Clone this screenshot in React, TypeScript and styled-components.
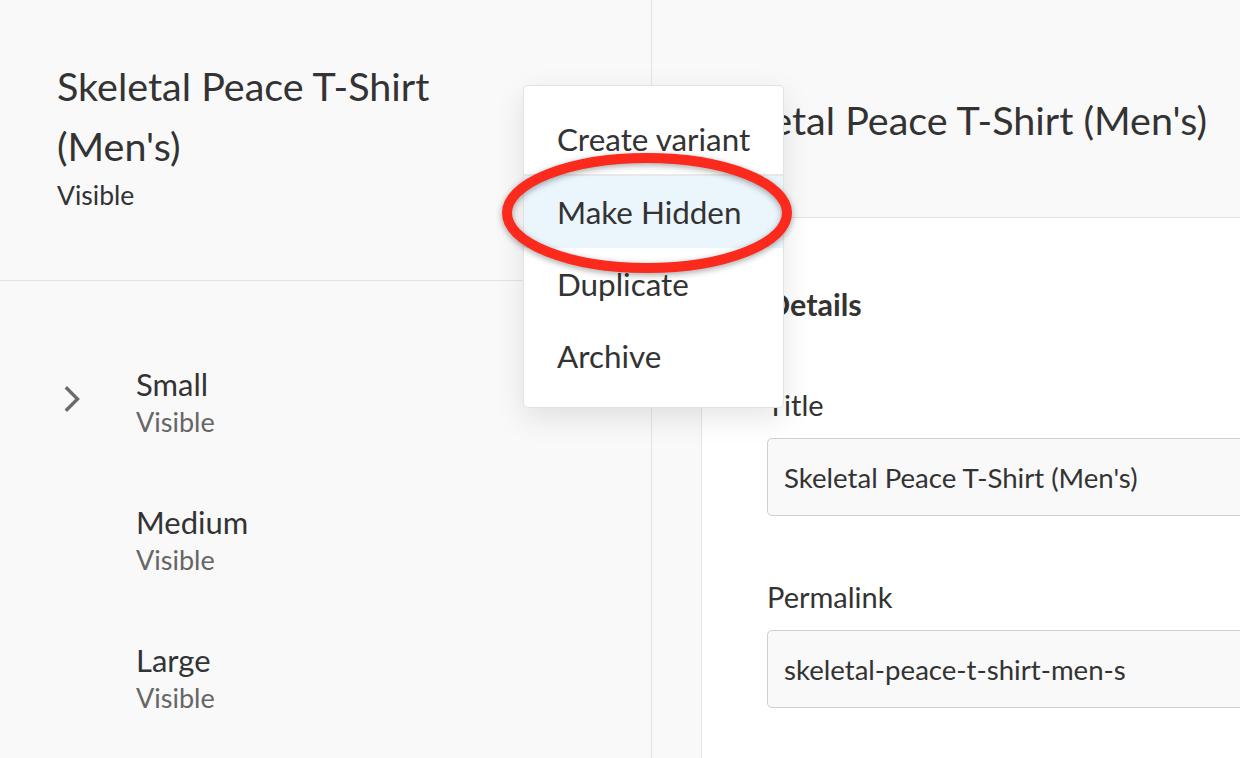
import React from "react";
import styled, { createGlobalStyle } from "styled-components";

const GlobalStyle = createGlobalStyle`
  html, body {
    margin: 0;
    padding: 0;
    background: #f9f9f9;
    overflow: hidden;
  }
  body {
    font-family: "Lato", "Open Sans", sans-serif;
    color: #333;
  }
  * { box-sizing: border-box; }
`;

const Page = styled.div`
  position: relative;
  display: flex;
  width: 1240px;
  height: 758px;
  overflow: hidden;
  background: #f9f9f9;
`;

const Sidebar = styled.aside`
  flex: 0 0 652px;
  display: flex;
  flex-direction: column;
  border-right: 1px solid #e4e4e4;
`;

const SidebarHeader = styled.header`
  flex-shrink: 0;
  height: 281px;
  padding: 56px 57px 0;
  border-bottom: 1px solid #e4e4e4;
`;

const ProductTitle = styled.h1`
  margin: 0;
  max-width: 440px;
  font-size: 39.5px;
  line-height: 60px;
  font-weight: 400;
  color: #333;
`;

const HeaderStatus = styled.div`
  font-size: 26.5px;
  line-height: 38px;
  color: #333;
`;

const VariantList = styled.ul`
  list-style: none;
  margin: 0;
  padding: 84px 0 0 57px;
  display: flex;
  flex-direction: column;
  gap: 62px;
`;

const VariantRow = styled.li`
  display: flex;
  align-items: center;
`;

const IconSlot = styled.div`
  flex: 0 0 79px;
  display: flex;
  align-items: center;
  padding: 0 0 8px 7px;
  color: #6b6b6b;
`;

const VariantText = styled.div`
  display: flex;
  flex-direction: column;
`;

const VariantName = styled.div`
  font-size: 31px;
  line-height: 38px;
  color: #333;
`;

const VariantStatus = styled.div`
  font-size: 27px;
  line-height: 38px;
  color: #666;
`;

const Main = styled.main`
  flex: 1;
  display: flex;
  flex-direction: column;
  padding-left: 49px;
  min-width: 0;
`;

const MainHeader = styled.header`
  flex-shrink: 0;
  height: 217px;
  padding-top: 90px;
`;

const MainTitle = styled.h2`
  margin: 0;
  font-size: 39.5px;
  line-height: 60px;
  font-weight: 400;
  color: #333;
  white-space: nowrap;
`;

const Card = styled.section`
  flex: 1 0 auto;
  width: calc(100% + 40px);
  background: #fff;
  border-top: 1px solid #e4e4e4;
  border-left: 1px solid #e4e4e4;
  padding: 66px 0 0 65px;
`;

const SectionTitle = styled.h3`
  margin: 0 0 61px;
  font-size: 30.5px;
  line-height: 40px;
  font-weight: 700;
  color: #333;
`;

const Field = styled.div`
  display: flex;
  flex-direction: column;
  margin-bottom: 61px;
`;

const Label = styled.label`
  font-size: 29px;
  line-height: 40px;
  margin-bottom: 13px;
  color: #333;
`;

const TextInput = styled.input`
  height: 78px;
  width: 100%;
  border: 1px solid #cfcfcf;
  border-radius: 5px;
  background: #f9f9f9;
  padding: 0 16px;
  font-family: "Lato", "Open Sans", sans-serif;
  font-size: 27.6px;
  color: #333;
  outline: none;
`;

const Menu = styled.ul`
  position: absolute;
  left: 523px;
  top: 85px;
  width: 261px;
  margin: 0;
  padding: 17px 0 15px;
  list-style: none;
  background: #fff;
  border: 1px solid #e2e2e2;
  border-radius: 5px;
  box-shadow: 0 10px 30px rgba(0, 0, 0, 0.1);
  z-index: 2;
`;

const MenuItem = styled.li<{ $active?: boolean; $divider?: boolean }>`
  height: ${(p) => (p.$divider ? 73 : 72)}px;
  display: flex;
  align-items: center;
  padding-left: 33px;
  font-size: 31.4px;
  color: #333;
  background: ${(p) => (p.$active ? "#ebf5fc" : "transparent")};
  border-bottom: ${(p) => (p.$divider ? "2px solid #e8e8e8" : "none")};
`;

const Annotation = styled.svg`
  position: absolute;
  left: 490px;
  top: 145px;
  width: 320px;
  height: 140px;
  z-index: 3;
  overflow: visible;
  filter: drop-shadow(0 2px 3px rgba(0, 0, 0, 0.35));
`;

const Chevron = () => (
  <svg width="20" height="26" viewBox="0 0 20 26" fill="none">
    <path d="M3 2.5 L13.5 13 L3 23.5" stroke="currentColor" strokeWidth="3.4" strokeLinecap="square" />
  </svg>
);

const variants = [
  { name: "Small", status: "Visible", expandable: true },
  { name: "Medium", status: "Visible", expandable: false },
  { name: "Large", status: "Visible", expandable: false },
];

export default function App() {
  return (
    <>
      <GlobalStyle />
      <Page>
        <Sidebar>
          <SidebarHeader>
            <ProductTitle>Skeletal Peace T-Shirt (Men's)</ProductTitle>
            <HeaderStatus>Visible</HeaderStatus>
          </SidebarHeader>
          <VariantList>
            {variants.map((v) => (
              <VariantRow key={v.name}>
                <IconSlot>{v.expandable && <Chevron />}</IconSlot>
                <VariantText>
                  <VariantName>{v.name}</VariantName>
                  <VariantStatus>{v.status}</VariantStatus>
                </VariantText>
              </VariantRow>
            ))}
          </VariantList>
        </Sidebar>
        <Main>
          <MainHeader>
            <MainTitle>Skeletal Peace T-Shirt (Men's)</MainTitle>
          </MainHeader>
          <Card>
            <SectionTitle>Details</SectionTitle>
            <Field>
              <Label>Title</Label>
              <TextInput readOnly value="Skeletal Peace T-Shirt (Men's)" />
            </Field>
            <Field>
              <Label>Permalink</Label>
              <TextInput readOnly value="skeletal-peace-t-shirt-men-s" />
            </Field>
          </Card>
        </Main>
        <Menu>
          <MenuItem $divider>Create variant</MenuItem>
          <MenuItem $active>Make Hidden</MenuItem>
          <MenuItem>Duplicate</MenuItem>
          <MenuItem>Archive</MenuItem>
        </Menu>
        <Annotation viewBox="0 0 320 140">
          <ellipse cx="157" cy="68" rx="140" ry="55" fill="none" stroke="#fc291d" strokeWidth="10" />
        </Annotation>
      </Page>
    </>
  );
}
